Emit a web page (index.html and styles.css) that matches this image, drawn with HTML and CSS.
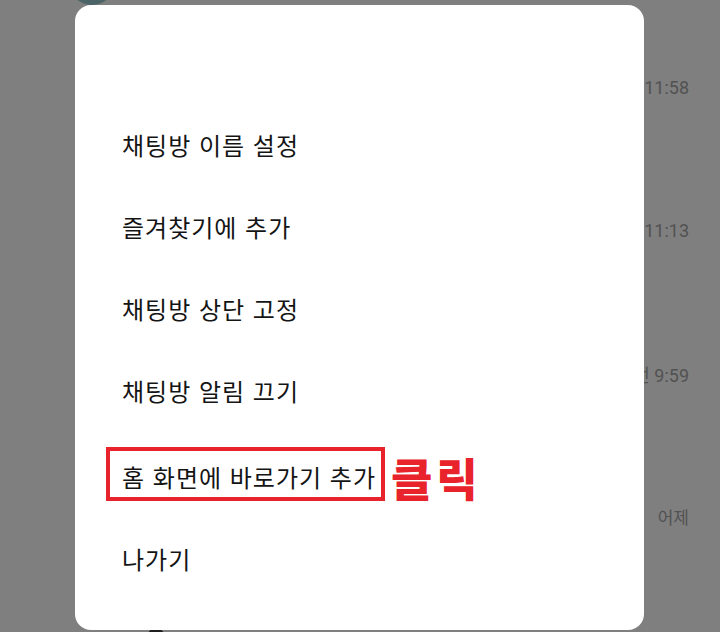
FILE: index.html
```html
<!DOCTYPE html>
<html lang="ko">
<head>
    <meta charset="UTF-8">
    <meta name="viewport" content="width=device-width, initial-scale=1.0">
    <title>채팅방 메뉴</title>
    <link rel="stylesheet" href="styles.css">
</head>
<body>
    <!-- 뒤쪽 채팅 목록 (어둡게 가려진 상태) -->
    <div class="chat-list">
        <div class="peek">
            <div class="avatar"></div>
        </div>
        <div class="chat-row"><span class="time">11:58</span></div>
        <div class="chat-row"><span class="time">11:13</span></div>
        <div class="chat-row"><span class="time">오전 9:59</span></div>
        <div class="chat-row"><span class="time ko">어제</span></div>
    </div>
    <div class="bottom-bump"></div>

    <!-- 길게 누르면 뜨는 메뉴 -->
    <div class="dialog">
        <ul class="menu">
            <li class="menu-item">채팅방 이름 설정</li>
            <li class="menu-item">즐겨찾기에 추가</li>
            <li class="menu-item">채팅방 상단 고정</li>
            <li class="menu-item">채팅방 알림 끄기</li>
            <li class="menu-item highlight">
                <span class="boxed">홈 화면에 바로가기 추가</span>
                <span class="click-label">클릭</span>
            </li>
            <li class="menu-item">나가기</li>
        </ul>
    </div>
</body>
</html>
```

FILE: styles.css
```css
/* 기본 */
body {
    margin: 0;
    height: 632px;
    background-color: #7f7f7f;
    font-family: "Noto Sans CJK KR", "Noto Sans", sans-serif;
    overflow: hidden;
}

/* 뒤쪽 채팅 목록 */
.chat-list {
    display: flex;
    flex-direction: column;
}
.peek {
    height: 16px;
    padding-left: 69px;
}
.avatar {
    width: 46px;
    height: 46px;
    margin-top: -41px;
    border-radius: 50%;
    background-color: #4a6468;
}
.chat-row {
    height: 143px;
    display: flex;
    justify-content: flex-end;
    align-items: center;
    padding-right: 31px;
}
.time {
    font-family: Roboto, "Noto Sans CJK KR", sans-serif;
    font-size: 18px;
    color: #525252;
}
.time.ko {
    font-family: "Noto Sans CJK KR", sans-serif;
    font-size: 17px;
}
.bottom-bump {
    position: absolute;
    left: 147px;
    top: 628px;
    width: 18px;
    height: 18px;
    border-radius: 50%;
    background-color: #1e1e1e;
}

/* 메뉴 팝업 */
.dialog {
    position: absolute;
    left: 75px;
    top: 5px;
    width: 569px;
    height: 625px;
    background-color: #ffffff;
    border-radius: 16px;
    box-sizing: border-box;
    padding-top: 98px;
}
.menu {
    list-style: none;
    margin: 0;
    padding: 0 0 0 47px;
}
.menu-item {
    height: 82px;
    display: flex;
    align-items: center;
    font-size: 24px;
    letter-spacing: 1px;
    color: #141414;
}
.menu-item.highlight {
    height: 86px;
}

/* 빨간 강조 표시 */
.boxed {
    line-height: 30px;
    border: 4px solid #e8232b;
    padding: 11px 5px 5px 12px;
    margin-left: -16px;
}
.click-label {
    margin-left: 6px;
    margin-top: 6px;
    font-size: 45px;
    font-weight: 900;
    letter-spacing: 4px;
    color: #e8232b;
    line-height: 1;
}
```
